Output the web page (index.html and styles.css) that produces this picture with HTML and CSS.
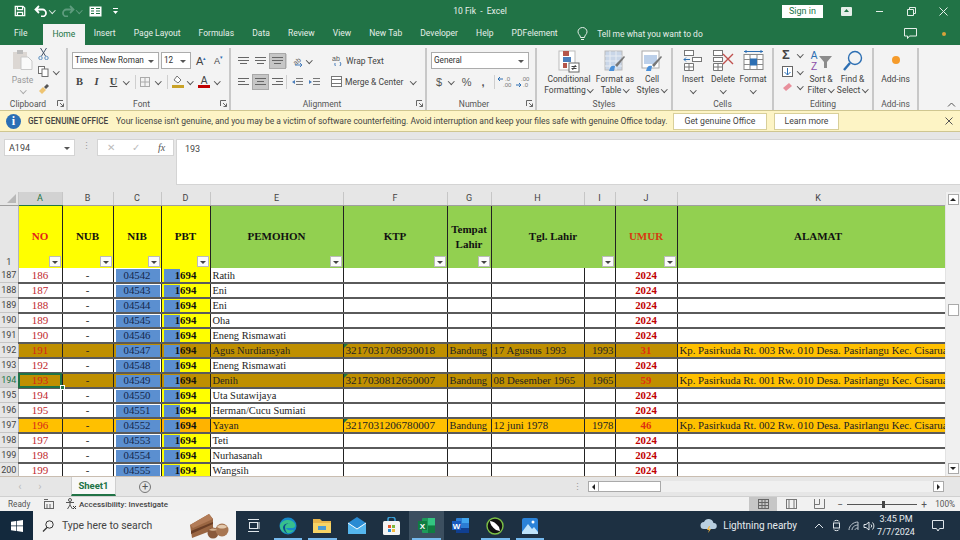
FILE: index.html
```html
<!DOCTYPE html>
<html lang="en">
<head>
<meta charset="utf-8">
<title>10 Fik - Excel</title>
<link rel="stylesheet" href="styles.css">
</head>
<body>
<div class="app">
  <header class="titlebar">
    <div class="qat">
      <svg width="12" height="12" viewBox="0 0 14 14" fill="none" stroke="#fff" stroke-width="1.500"><path d="M1.500 1.500h9l2 2v9h-11z"/><path d="M4 1.500v4h6v-4M4 12.500v-4h6v4"/></svg>
      <svg class="q-undo" width="14" height="12" viewBox="0 0 14 12" fill="none" stroke="#fff" stroke-width="1.800"><path d="M5 1 1.500 4.500 5 8M2 4.500h6.500a3.500 3.500 0 0 1 0 7H7"/></svg>
      <i class="chev light q-c1"></i>
      <svg class="q-redo" width="14" height="12" viewBox="0 0 14 12" fill="none" stroke="#5f9c7e" stroke-width="1.800"><path d="M9 1l3.500 3.500L9 8M12 4.500H5.500a3.500 3.500 0 0 0 0 7H7"/></svg>
      <i class="chev faint q-c2"></i>
      <svg class="q-form" width="13" height="11" viewBox="0 0 13 11"><rect x=".5" y=".5" width="12" height="10" fill="#fff"/><path d="M2 2.500h3M2 5h3M2 7.500h3M7 2.500h4M7 5h4M7 7.500h4" stroke="#217346"/></svg>
      <svg class="q-more" width="7" height="7" viewBox="0 0 7 7" fill="#fff"><path d="M1 0h5v1H1zM1 3h5L3.500 6z"/></svg>
    </div>
    <div class="doc-title">10 Fik &nbsp;-&nbsp; Excel</div>
    <div class="win">
      <button class="signin">Sign in</button>
      <svg class="w-ico" width="11" height="9" viewBox="0 0 11 9"><rect width="11" height="9" rx="1" fill="#e5efe9"/><path d="M5.500 2 3 5h5z" fill="#217346"/></svg>
      <svg class="w-ico" width="9" height="9" viewBox="0 0 9 9"><path d="M1 4.500h7" stroke="#e5efe9"/></svg>
      <svg class="w-ico" width="9" height="9" viewBox="0 0 9 9" fill="none" stroke="#e5efe9"><path d="M2.500 2V.5h6v6H7M.5 2.500h6v6h-6z"/></svg>
      <svg class="w-ico" width="9" height="9" viewBox="0 0 9 9"><path d="M.5.500l8 8m0-8l-8 8" stroke="#e5efe9"/></svg>
    </div>
  </header>

  <nav class="tabs">
    <span class="tab">File</span>
    <span class="tab active">Home</span>
    <span class="tab">Insert</span>
    <span class="tab">Page Layout</span>
    <span class="tab">Formulas</span>
    <span class="tab">Data</span>
    <span class="tab">Review</span>
    <span class="tab">View</span>
    <span class="tab">New Tab</span>
    <span class="tab">Developer</span>
    <span class="tab">Help</span>
    <span class="tab">PDFelement</span>
    <svg class="bulb" width="11" height="14" viewBox="0 0 11 14" fill="none" stroke="#e5efe9"><path d="M3.500 10.500C3.500 8 1 7.500 1 4.800a4.500 4.300 0 0 1 9 0c0 2.700-2.500 3.200-2.500 5.700zM4 12.500h3"/></svg>
    <span class="tell">Tell me what you want to do</span>
    <svg class="comment" width="13" height="11" viewBox="0 0 13 11" fill="none" stroke="#e5efe9"><path d="M.5.500h12v7.500H5.500L3.500 10.500V8h-3z"/></svg>
    <span class="tab-dot"></span>
  </nav>

  <section class="ribbon">
    <div class="group g-clip">
      <div class="group-body">
        <div class="paste">
          <svg width="21" height="20" viewBox="0 0 21 20"><rect x="1" y="2" width="14" height="17" fill="#dcd7d3"/><rect x="5" y="0" width="6" height="4" fill="#bdbdbd"/><path d="M9 7h7l4 4v8.500H9z" fill="#fafafa" stroke="#c9c9c9"/></svg>
          <span class="paste-l">Paste</span>
          <i class="chev faint p-c"></i>
        </div>
        <div class="clip-tools">
          <svg width="11" height="12" viewBox="0 0 11 12" fill="none" stroke="#44546a"><path d="M2.500 0l5 8M8.500 0l-5 8"/><circle cx="2.500" cy="10" r="1.700" stroke="#5b8fc0"/><circle cx="8.500" cy="10" r="1.700" stroke="#5b8fc0"/></svg>
          <div class="tool-row"><svg width="11" height="11" viewBox="0 0 11 11" fill="#fff" stroke="#707070"><rect x=".5" y=".5" width="6" height="7"/><rect x="4" y="3" width="6" height="7.500"/></svg><i class="chev m1"></i></div>
          <svg width="12" height="12" viewBox="0 0 12 12"><path d="M1 8l4-4 3 3-4 4z" fill="#eec472"/><path d="M6 4l3-3 2 2-3 3z" fill="#555"/></svg>
        </div>
      </div>
      <div class="group-label lp10">Clipboard<svg class="launch" width="7" height="7" viewBox="0 0 7 7" fill="none" stroke="#666"><path d="M.5 6V.5H6M3 3l3.500 3.500M6.500 3.500v3h-3"/></svg></div>
    </div>

    <div class="group g-font">
      <div class="group-body col">
        <div class="line">
          <div class="select s-font">Times New Roman<i></i></div>
          <div class="select s-size">12<i></i></div>
          <span class="fa big-a">A<sup>▴</sup></span>
          <span class="fa small-a">A<sup>▾</sup></span>
        </div>
        <div class="line l2 f2">
          <b class="fmt">B</b><em class="fmt">I</em><u class="fmt">U</u><i class="chev"></i>
          <span class="vsep f-s1"></span>
          <svg width="10" height="10" viewBox="0 0 10 10" fill="none" stroke="#aaa"><rect x=".5" y=".5" width="9" height="9"/><path d="M5 0v10M0 5h10"/></svg><i class="chev f-c2"></i>
          <span class="vsep f-s2"></span>
          <svg width="12" height="13" viewBox="0 0 12 13"><path d="M5 1l4 4-3 3-4-3z" fill="#fff" stroke="#777"/><rect y="10" width="12" height="3" fill="#c9a227"/></svg><i class="chev f-c3"></i>
          <svg class="f-a" width="12" height="13" viewBox="0 0 12 13"><text x="6" y="9" font-size="10" text-anchor="middle" fill="#444" font-family="Liberation Sans">A</text><rect y="10" width="12" height="3" fill="#c00000"/></svg><i class="chev f-c4"></i>
        </div>
      </div>
      <div class="group-label lp14">Font<svg class="launch" width="7" height="7" viewBox="0 0 7 7" fill="none" stroke="#666"><path d="M.5 6V.5H6M3 3l3.500 3.500M6.500 3.500v3h-3"/></svg></div>
    </div>

    <div class="group g-align">
      <div class="group-body col">
        <div class="line a-line">
          <span class="al"><svg width="11" height="7" viewBox="0 0 11 7" stroke="#666"><path d="M0 .5h11M0 3.500h11M2 6.500h7"/></svg></span>
          <span class="al"><svg width="11" height="7" viewBox="0 0 11 7" stroke="#666"><path d="M0 .5h11M0 3.500h11M2 6.500h7"/></svg></span>
          <span class="al on"><svg width="11" height="7" viewBox="0 0 11 7" stroke="#666"><path d="M0 .5h11M0 3.500h11M2 6.500h7"/></svg></span>
          <span class="vsep a-s"></span>
          <svg width="12" height="12" viewBox="0 0 12 12" fill="none"><text x="1" y="8" font-size="7" fill="#555" font-family="Liberation Sans" transform="rotate(-40 6 6)">ab</text><path d="M3 10l7 0M8 8l2 2-2 2" stroke="#4a7ebb"/></svg><i class="chev a-c"></i>
          <span class="wide-l wrap"><svg width="11" height="11" viewBox="0 0 11 11" fill="none"><text x="0" y="6" font-size="7" fill="#555" font-family="Liberation Sans">ab</text><path d="M8 7a3 3 0 1 1-5 1" stroke="#4a7ebb"/></svg>Wrap Text</span>
        </div>
        <div class="line l2 a-line">
          <span class="al"><svg width="11" height="8" viewBox="0 0 11 8" stroke="#666"><path d="M0 .5h11M0 3.500h7M0 6.500h11"/></svg></span>
          <span class="al on"><svg width="11" height="8" viewBox="0 0 11 8" stroke="#666"><path d="M0 .5h11M2 3.500h7M0 6.500h11"/></svg></span>
          <span class="al"><svg width="11" height="8" viewBox="0 0 11 8" stroke="#666"><path d="M0 .5h11M4 3.500h7M0 6.500h11"/></svg></span>
          <span class="vsep a-s"></span>
          <svg width="11" height="8" viewBox="0 0 11 8"><path d="M0 4l3-2v4z" fill="#4a7ebb"/><path d="M4 .5h7M4 3.500h7M4 6.500h7" stroke="#777"/></svg>
          <svg class="a-ind" width="11" height="8" viewBox="0 0 11 8"><path d="M3 4l-3-2v4z" fill="#4a7ebb"/><path d="M4 .5h7M4 3.500h7M4 6.500h7" stroke="#777"/></svg>
          <span class="wide-l merge"><svg width="11" height="11" viewBox="0 0 11 11" fill="#fff" stroke="#777"><rect x=".5" y=".5" width="10" height="10"/><path d="M0 3.500h11M0 7.500h11"/></svg>Merge &amp; Center</span><i class="chev m-c"></i>
        </div>
      </div>
      <div class="group-label lp12">Alignment<svg class="launch" width="7" height="7" viewBox="0 0 7 7" fill="none" stroke="#666"><path d="M.5 6V.5H6M3 3l3.500 3.500M6.500 3.500v3h-3"/></svg></div>
    </div>

    <div class="group g-num">
      <div class="group-body col">
        <div class="line"><div class="select s-num">General<i></i></div></div>
        <div class="line l2 n2">
          <span class="sym">$</span><i class="chev n-c"></i><span class="sym pct">%</span><span class="sym comma">,</span><span class="vsep n-s"></span>
          <svg class="dec" width="14" height="12" viewBox="0 0 14 12" font-size="6" font-family="Liberation Sans" fill="#777"><text x="7" y="5">.0</text><text x="5" y="11">.00</text><path d="M0 3h5M2 1 0 3l2 2" stroke="#2d6fb3" fill="none"/></svg>
          <svg class="dec d2" width="14" height="12" viewBox="0 0 14 12" font-size="6" font-family="Liberation Sans" fill="#777"><text x="5" y="5">.00</text><text x="7" y="11">.0</text><path d="M0 9h5M3 7l2 2-2 2" stroke="#2d6fb3" fill="none"/></svg>
        </div>
      </div>
      <div class="group-label lp14">Number<svg class="launch" width="7" height="7" viewBox="0 0 7 7" fill="none" stroke="#666"><path d="M.5 6V.5H6M3 3l3.500 3.500M6.500 3.500v3h-3"/></svg></div>
    </div>

    <div class="group g-styles">
      <div class="group-body">
        <div class="big b-cond">
          <svg width="22" height="23" viewBox="0 0 22 23"><rect x="1" y="1" width="16" height="19" fill="#fff" stroke="#bbb"/><rect x="5" y="1" width="6" height="5" fill="#b4554a"/><rect x="5" y="7" width="8" height="5" fill="#4a7ebb"/><rect x="5" y="13" width="4" height="5" fill="#b4554a"/><rect x="11" y="13" width="10" height="9" fill="#fff" stroke="#666"/><path d="M13.500 16.500h5M13.500 18.500h5M17.500 15l-3 5" stroke="#444" fill="none"/></svg>
          <span>Conditional<br>Formatting<i class="chev t-c"></i></span>
        </div>
        <div class="big b-table">
          <svg width="22" height="23" viewBox="0 0 22 23"><rect x="1" y="1" width="17" height="19" fill="#c9d6e8" stroke="#bbb"/><path d="M1 6h17M1 11h17M1 16h17M6 1v19M12 1v19" stroke="#e8edf3"/><path d="M5 21c1-5 3-6 6-5l-1 5z" fill="#4a90d9"/><path d="M11 15l9-9 1 1-8 10z" fill="#777"/></svg>
          <span>Format as<br>Table<i class="chev t-c"></i></span>
        </div>
        <div class="big b-cell">
          <svg width="22" height="23" viewBox="0 0 22 23"><rect x="1" y="1" width="17" height="17" fill="#fff" stroke="#aaa"/><rect x="3" y="5" width="13" height="9" fill="#bcd0ea"/><path d="M5 21c1-5 3-6 6-5l-1 5z" fill="#4a90d9"/><path d="M11 15l9-9 1 1-8 10z" fill="#777"/></svg>
          <span>Cell<br>Styles<i class="chev t-c"></i></span>
        </div>
      </div>
      <div class="group-label">Styles</div>
    </div>

    <div class="group g-cells">
      <div class="group-body">
        <div class="big b-c">
          <svg width="20" height="21" viewBox="0 0 20 21" fill="#fff" stroke="#777"><rect x="1.500" y=".5" width="9" height="5"/><rect x="9.500" y="7.500" width="9" height="4"/><path d="M7 9.500H1M3 7.500l-2 2 2 2" fill="none" stroke="#2d6fb3"/><path d="M1.500 13.500h9v7h-9zM6 13.500v7M1.500 17h9"/></svg>
          <span>Insert</span><i class="chev c-c"></i>
        </div>
        <div class="big b-c">
          <svg width="22" height="21" viewBox="0 0 22 21" fill="#fff" stroke="#777"><rect x="1.500" y=".5" width="9" height="5"/><rect x="1.500" y="7.500" width="9" height="4"/><path d="M1.500 13.500h9v7h-9zM6 13.500v7M1.500 17h9"/><path d="M11 4l10 10m0-10L11 14" stroke="#c0504d" stroke-width="1.400" fill="none"/></svg>
          <span>Delete</span><i class="chev c-c"></i>
        </div>
        <div class="big b-c">
          <svg width="21" height="21" viewBox="0 0 21 21" fill="#fff" stroke="#888"><path d="M1 1.500h19M3 0v3M18 0v3" stroke="#2d6fb3"/><rect x="1" y="4.500" width="19" height="15"/><path d="M7 4.500v15M14 4.500v15M1 9.500h19M1 14.500h19"/><rect x="7" y="8.500" width="7" height="7" fill="#2d6fb3" stroke="none"/></svg>
          <span>Format</span><i class="chev c-c"></i>
        </div>
      </div>
      <div class="group-label">Cells</div>
    </div>

    <div class="group g-edit">
      <div class="group-body">
        <div class="edit-tools">
          <div class="tool-row"><span class="sigma">Σ</span><i class="chev e-c"></i></div>
          <div class="tool-row"><svg width="11" height="11" viewBox="0 0 11 11" fill="#fff" stroke="#666"><rect x=".5" y=".5" width="10" height="10"/><path d="M5.500 2v7M2.500 6l3 3 3-3" stroke="#2d6fb3" fill="none"/></svg><i class="chev e-c"></i></div>
          <div class="tool-row"><svg width="11" height="10" viewBox="0 0 11 10"><path d="M1 6l6-5 3 3-6 5z" fill="#e8909c"/></svg><i class="chev e-c"></i></div>
        </div>
        <div class="big b-sort">
          <svg width="24" height="21" viewBox="0 0 24 21"><text x="5" y="9" font-size="10" text-anchor="middle" fill="#2d6fb3" font-family="Liberation Sans">A</text><text x="5" y="20" font-size="10" text-anchor="middle" fill="#8c4fa8" font-family="Liberation Sans">Z</text><path d="M10 6h13l-5 6v6h-3v-6z" fill="#8c8c8c"/></svg>
          <span class="b-t2">Sort &amp;<br>Filter<i class="chev t-c"></i></span>
        </div>
        <div class="big b-find">
          <svg width="21" height="22" viewBox="0 0 21 22" fill="none"><circle cx="13" cy="8" r="6.500" stroke="#2d6fb3" stroke-width="1.400"/><path d="M8 13l-6 7" stroke="#2d6fb3" stroke-width="2.400"/></svg>
          <span class="b-t3">Find &amp;<br>Select<i class="chev t-c"></i></span>
        </div>
      </div>
      <div class="group-label">Editing</div>
    </div>

    <div class="group g-add">
      <div class="group-body">
        <div class="big b-add"><i class="orange"></i><span>Add-ins</span></div>
      </div>
      <div class="group-label">Add-ins</div>
    </div>
    <svg class="collapse" width="9" height="5" viewBox="0 0 9 5" fill="none" stroke="#555"><path d="M1 4.500l3.500-3.500L8 4.500"/></svg>
  </section>

  <aside class="infobar">
    <span class="info-i">i</span>
    <strong>GET GENUINE OFFICE</strong>
    <span class="info-t">Your license isn't genuine, and you may be a victim of software counterfeiting. Avoid interruption and keep your files safe with genuine Office today.</span>
    <button class="info-b b1">Get genuine Office</button>
    <button class="info-b b2">Learn more</button>
    <svg class="info-x" width="8" height="8" viewBox="0 0 8 8"><path d="M.5.500l7 7m0-7l-7 7" stroke="#555"/></svg>
  </aside>

  <section class="fbar">
    <div class="namebox">A194<i></i></div>
    <span class="fdots">⋮</span>
    <div class="fbtns"><span class="fx-x">✕</span><span class="fx-c">✓</span><em>fx</em></div>
    <div class="finput">193</div>
  </section>

  <main class="sheet-wrap">
    <div class="sheet">
      <table class="grid">
        <colgroup><col class="w0"><col class="w1"><col class="w2"><col class="w3"><col class="w4"><col class="w5"><col class="w6"><col class="w7"><col class="w8"><col class="w9"><col class="w10"><col class="w11"></colgroup>
        <thead>
          <tr class="cols"><th class="corner"><span></span></th><th class="sel">A</th><th>B</th><th>C</th><th>D</th><th>E</th><th>F</th><th>G</th><th>H</th><th>I</th><th>J</th><th>K</th></tr>
          <tr class="head">
            <th class="rn">1</th>
            <th class="y red">NO<i class="f"></i></th><th class="y">NUB<i class="f"></i></th><th class="y">NIB<i class="f"></i></th><th class="y">PBT<i class="f"></i></th>
            <th class="g">PEMOHON<i class="f"></i></th><th class="g">KTP<i class="f"></i></th><th class="g">Tempat<br>Lahir<i class="f"></i></th><th class="g" colspan="2">Tgl. Lahir<i class="f"></i></th><th class="g red">UMUR<i class="f"></i></th><th class="g">ALAMAT</th>
          </tr>
        </thead>
        <tbody>
          <tr><th>187</th><td>186</td><td>-</td><td>04542</td><td>1694</td><td>Ratih</td><td></td><td></td><td></td><td></td><td>2024</td><td></td></tr>
          <tr><th>188</th><td>187</td><td>-</td><td>04543</td><td>1694</td><td>Eni</td><td></td><td></td><td></td><td></td><td>2024</td><td></td></tr>
          <tr><th>189</th><td>188</td><td>-</td><td>04544</td><td>1694</td><td>Eni</td><td></td><td></td><td></td><td></td><td>2024</td><td></td></tr>
          <tr><th>190</th><td>189</td><td>-</td><td>04545</td><td>1694</td><td>Oha</td><td></td><td></td><td></td><td></td><td>2024</td><td></td></tr>
          <tr><th>191</th><td>190</td><td>-</td><td>04546</td><td>1694</td><td>Eneng Rismawati</td><td></td><td></td><td></td><td></td><td>2024</td><td></td></tr>
          <tr class="gold"><th>192</th><td>191</td><td>-</td><td>04547</td><td>1694</td><td>Agus Nurdiansyah</td><td class="tri">3217031708930018</td><td>Bandung</td><td>17 Agustus 1993</td><td class="yr">1993</td><td>31</td><td>Kp. Pasirkuda Rt. 003 Rw. 010 Desa. Pasirlangu Kec. Cisarua</td></tr>
          <tr><th>193</th><td>192</td><td>-</td><td>04548</td><td>1694</td><td>Eneng Rismawati</td><td></td><td></td><td></td><td></td><td>2024</td><td></td></tr>
          <tr class="gold cur"><th>194</th><td class="active">193<i class="handle"></i></td><td>-</td><td>04549</td><td>1694</td><td>Denih</td><td class="tri">3217030812650007</td><td>Bandung</td><td>08 Desember 1965</td><td class="yr">1965</td><td>59</td><td>Kp. Pasirkuda Rt. 001 Rw. 010 Desa. Pasirlangu Kec. Cisarua</td></tr>
          <tr><th>195</th><td>194</td><td>-</td><td>04550</td><td>1694</td><td>Uta Sutawijaya</td><td></td><td></td><td></td><td></td><td>2024</td><td></td></tr>
          <tr><th>196</th><td>195</td><td>-</td><td>04551</td><td>1694</td><td>Herman/Cucu Sumiati</td><td></td><td></td><td></td><td></td><td>2024</td><td></td></tr>
          <tr class="amber"><th>197</th><td>196</td><td>-</td><td>04552</td><td>1694</td><td>Yayan</td><td class="tri">3217031206780007</td><td>Bandung</td><td>12 juni 1978</td><td class="yr">1978</td><td>46</td><td>Kp. Pasirkuda Rt. 002 Rw. 010 Desa. Pasirlangu Kec. Cisarua</td></tr>
          <tr><th>198</th><td>197</td><td>-</td><td>04553</td><td>1694</td><td>Teti</td><td></td><td></td><td></td><td></td><td>2024</td><td></td></tr>
          <tr><th>199</th><td>198</td><td>-</td><td>04554</td><td>1694</td><td>Nurhasanah</td><td></td><td></td><td></td><td></td><td>2024</td><td></td></tr>
          <tr><th>200</th><td>199</td><td>-</td><td>04555</td><td>1694</td><td>Wangsih</td><td></td><td></td><td></td><td></td><td>2024</td><td></td></tr>
        </tbody>
      </table>
    </div>
    <div class="vscroll">
      <span class="sb-btn"><i class="tri-u"></i></span>
      <span class="sb-thumb"></span>
      <span class="sb-btn end"><i class="tri-d"></i></span>
    </div>
  </main>

  <section class="sheetbar">
    <span class="nav-a">‹</span><span class="nav-a">›</span>
    <span class="sheet-tab">Sheet1</span>
    <span class="add-sheet">+</span>
    <span class="hdots">⋮</span>
    <div class="hscroll"><span class="hs-btn"><i class="tri-l"></i></span><span class="hs-thumb"></span><span class="hs-btn end"><i class="tri-r"></i></span></div>
  </section>

  <footer class="status">
    <span class="ready">Ready</span>
    <svg class="st-macro" width="10" height="10" viewBox="0 0 10 10" fill="none" stroke="#666"><rect x=".5" y="2.500" width="9" height="7"/><path d="M0 .5h4M3 5v4M6 5v4"/></svg>
    <svg class="st-acc" width="12" height="12" viewBox="0 0 12 12" fill="none" stroke="#555"><circle cx="5" cy="2" r="1.500"/><path d="M1 4.500h8M5 4v3l-2.500 4M5 7l2.500 4"/><path d="M8 8l3 3m0-3l-3 3" stroke="#333"/></svg>
    <span class="acc">Accessibility: Investigate</span>
    <div class="views">
      <span class="view on"><svg width="11" height="10" viewBox="0 0 11 10" fill="none" stroke="#666"><rect x=".5" y=".5" width="10" height="9"/><path d="M4 0v10M7 0v10M0 3.500h11M0 6.500h11"/></svg></span>
      <span class="view"><svg width="11" height="10" viewBox="0 0 11 10" fill="none" stroke="#777"><rect x=".5" y=".5" width="10" height="9"/><path d="M3 .5v9M8 .5v9"/></svg></span>
      <span class="view"><svg width="11" height="10" viewBox="0 0 11 10" fill="none" stroke="#777"><path d="M.5 0v9.500h10V0M5.500 0v5.500H.5"/></svg></span>
      <span class="zoom-m">−</span>
      <span class="slider"><i></i></span>
      <span class="zoom-p">+</span>
      <span class="zoom-v">100%</span>
    </div>
  </footer>

  <footer class="taskbar">
    <span class="start"><svg width="12" height="12" viewBox="0 0 12 12" fill="#fff"><path d="M0 1.700 5 1v4.600H0zM5.700.9 12 0v5.600H5.700zM0 6.300h5V11l-5-.7zM5.700 6.300H12V12l-6.300-.9z"/></svg></span>
    <div class="search">
      <svg width="12" height="12" viewBox="0 0 12 12" fill="none" stroke="#333"><circle cx="7.500" cy="4.500" r="3.700"/><path d="M5 7.500 1 11.500" stroke-width="1.300"/></svg>
      <span class="s-txt">Type here to search</span>
      <svg class="cake" width="40" height="26" viewBox="0 0 40 26"><path d="M1 12 20 1l4 5v11L3 25z" fill="#9a6642"/><path d="M1 12 20 1l4 5L4 15z" fill="#b27c58"/><path d="M2 18 24 9v2L2 21z" fill="#6b3f26"/><circle cx="24" cy="20" r="5.500" fill="#8a5a3b"/><circle cx="33" cy="17" r="6.500" fill="#a87652"/><path d="M28 14c2-3 8-3 10 0-3 2-7 2-10 0z" fill="#e3c9ad"/><path d="M20 17c2-2 6-2 8 0-2 1-6 1-8 0z" fill="#d3b08e"/></svg>
    </div>
    <div class="apps">
      <span class="app-i"><svg width="13" height="13" viewBox="0 0 13 13" fill="none" stroke="#dfe5ea"><rect x="2.500" y="3.500" width="8" height="6"/><path d="M1 .5h11M1 12.500h11M12 3v7"/></svg></span>
      <span class="app-i ul"><svg width="18" height="18" viewBox="0 0 18 18"><circle cx="9" cy="9" r="8.500" fill="#1689c9"/><path d="M1 8C3 2 13 1 16 7c1 3-1 4-3 4H7c1 2 4 3 8 2-3 4-9 4-12 1C1 12 1 10 1 8z" fill="#37c08d"/><path d="M6 10C6 7 9 6 11 7c-2-1-6-1-7 3 0 3 2 6 6 7-3-1-4-4-4-7z" fill="#0b4f8f"/></svg></span>
      <span class="app-i ul"><svg width="18" height="15" viewBox="0 0 18 15"><path d="M0 1h7l2 2h9v12H0z" fill="#e8b54a"/><rect x="0" y="5" width="18" height="10" fill="#f6d365"/><rect x="5" y="8" width="8" height="4" fill="#4a9bd4"/></svg></span>
      <span class="app-i"><svg width="18" height="17" viewBox="0 0 18 17"><path d="M0 6 9 0l9 6v11H0z" fill="#2a8bd3"/><path d="M0 6l9 6 9-6v11H0z" fill="#55b6ee"/><path d="M0 6l9 6 9-6" fill="none" stroke="#fff"/></svg></span>
      <span class="app-i"><svg width="17" height="18" viewBox="0 0 17 18"><rect y="4" width="17" height="14" rx="1.500" fill="#f4f4f4"/><path d="M5 4V2a3.500 2 0 0 1 7 0v2" fill="none" stroke="#3aa0d8" stroke-width="1.500"/><rect x="5" y="8" width="3" height="3" fill="#e8562a"/><rect x="9" y="8" width="3" height="3" fill="#7db93b"/><rect x="5" y="12" width="3" height="3" fill="#2a8bd3"/><rect x="9" y="12" width="3" height="3" fill="#f5b93a"/></svg></span>
      <span class="app-i cur ul"><svg width="17" height="15" viewBox="0 0 17 15"><rect x="4" width="13" height="15" rx="1" fill="#1e9b5b"/><rect x="10" y="0" width="7" height="7" fill="#33c481"/><rect x="10" y="8" width="7" height="7" fill="#107c41"/><rect y="3" width="9" height="9" fill="#107c41"/><text x="4.500" y="10.500" font-size="8" font-weight="700" text-anchor="middle" fill="#fff" font-family="Liberation Sans">X</text></svg></span>
      <span class="app-i"><svg width="17" height="15" viewBox="0 0 17 15"><rect x="4" width="13" height="15" rx="1" fill="#2b7cd3"/><rect x="4" y="10" width="13" height="5" fill="#103f91"/><rect x="10" y="0" width="7" height="5" fill="#41a5ee"/><rect y="3" width="9" height="9" fill="#185abd"/><text x="4.500" y="10.500" font-size="8" font-weight="700" text-anchor="middle" fill="#fff" font-family="Liberation Sans">W</text></svg></span>
      <span class="app-i ul"><svg width="18" height="18" viewBox="0 0 18 18"><circle cx="9" cy="9" r="8" fill="#111" stroke="#7cc046" stroke-width="1.400"/><path d="M4 4c3 0 6 2 9 6l1 4-4-1C6 10 4 7 4 4z" fill="#fff"/></svg></span>
      <span class="app-i ul"><svg width="16" height="16" viewBox="0 0 16 16"><rect width="16" height="16" rx="2" fill="#2a82d8"/><path d="M0 14 6 6l4 5 2-2 4 5v2H0z" fill="#bfe3fa"/><circle cx="11" cy="4" r="1.500" fill="#fff"/></svg></span>
    </div>
    <div class="tray">
      <svg class="weather" width="18" height="17" viewBox="0 0 18 17"><path d="M4 12a3.500 3.500 0 0 1 0-7 5 5 0 0 1 9.500 1A3 3 0 0 1 14 12z" fill="#b9cfe0"/><path d="M9 9l-2 4h2l-1 3 3-4H9l1-3z" fill="#f4b63f"/></svg>
      <span class="w-txt">Lightning nearby</span>
      <svg class="t-up" width="10" height="6" viewBox="0 0 10 6" fill="none" stroke="#dfe5ea"><path d="M1 5l4-4 4 4"/></svg>
      <svg class="t-meet" width="9" height="13" viewBox="0 0 9 13" fill="none" stroke="#dfe5ea"><rect x="1.500" y="4" width="6" height="5"/><path d="M2 2.500C2 1 7 1 7 2.500M2 10.500c0 1.500 5 1.500 5 0"/></svg>
      <svg class="t-wifi" width="11" height="10" viewBox="0 0 11 10" fill="none" stroke="#b9c3cc"><path d="M1 9c0-4 4-8 9-8M4 9c0-3 3-5 6-5M7 9c0-1 1-2 3-2M10 9V1"/></svg>
      <svg class="t-vol" width="12" height="10" viewBox="0 0 12 10" fill="none" stroke="#dfe5ea"><path d="M1 3.500h2L6 1v8L3 6.500H1zM8 3.500a2 2 0 0 1 0 3M9.500 1.500a5 5 0 0 1 0 7"/></svg>
      <div class="clock"><span>3:45 PM</span><span>7/7/2024</span></div>
      <svg class="t-note" width="12" height="12" viewBox="0 0 12 12" fill="none" stroke="#dfe5ea"><path d="M.5.500h11v8H7.500L6 11 4.500 8.500h-4z"/></svg>
    </div>
  </footer>
</div>
</body>
</html>
```

FILE: styles.css
```css
* { box-sizing: border-box; }
html, body { margin: 0; padding: 0; }
body { width: 960px; height: 540px; overflow: hidden; font-family: Roboto, "Noto Sans", sans-serif; font-size: 9px; color: #444; }
.app { width: 960px; height: 540px; display: flex; flex-direction: column; background: #e6e6e6; }
button { font: inherit; padding: 0; }
svg { flex: none; }

/* Chevrons */
.chev { display: inline-block; width: 7px; height: 7px; position: relative; flex: none; --c: #555; }
.chev::before { content: ""; position: absolute; left: 1.500px; top: .5px; width: 3.500px; height: 3.500px; border-right: 1px solid var(--c); border-bottom: 1px solid var(--c); transform: rotate(45deg); }
.chev.light { --c: #dfe9e3; }
.chev.faint { --c: #5f9c7e; }
.paste .chev.faint { --c: #aaa; }

/* Title bar */
.titlebar { height: 22px; background: #217346; color: #e8f1ec; display: grid; grid-template-columns: 1fr auto 1fr; align-items: center; }
.qat { display: flex; align-items: center; padding-left: 14px; }
.q-undo { margin-left: 8px; }
.q-c1 { margin-left: .5px; }
.q-redo { margin-left: 5.500px; }
.q-form { margin-left: 7px; }
.q-more { margin-left: 10px; }
.doc-title { font-size: 8.500px; white-space: pre; }
.win { display: flex; justify-content: flex-end; align-items: center; }
.signin { width: 41px; height: 13px; line-height: 12px; background: #fff; border: 0; color: #217346; margin-right: 18px; font-size: 9px; }
.w-ico { margin-right: 23px; }
.w-ico:last-child { margin-right: 12px; }

/* Tabs */
.tabs { height: 23px; background: #217346; display: flex; align-items: center; color: #e5efe9; font-size: 8.500px; padding-left: 5px; }
.tab { padding: 0 9.050px; height: 23px; line-height: 23px; }
.tab.active { background: #f3f3f3; color: #217346; height: 21px; margin: 2px 0 0 6.500px; line-height: 20px; padding: 0 9.500px; }
.bulb { margin-left: 10px; }
.tell { margin-left: 9.500px; }
.comment { margin-left: auto; margin-right: 25px; }
.tab-dot { width: 4px; height: 4px; border-radius: 50%; background: #d8a23a; margin-right: 14px; }

/* Ribbon */
.ribbon { height: 65px; background: #f3f3f3; display: flex; padding-top: 3px; position: relative; font-size: 8.500px; color: #444; }
.group { display: flex; flex-direction: column; border-right: 2px solid #c8c8c8; height: 62px; }
.group-body { flex: 1; display: flex; min-height: 0; }
.group-body.col { flex-direction: column; }
.group-label { height: 14px; padding-top: 1px; line-height: 14px; text-align: center; position: relative; color: #555; }
.lp10 { padding-right: 10px; } .lp12 { padding-right: 12px; } .lp14 { padding-right: 14px; }
.launch { position: absolute; right: 2px; bottom: 3px; }
.g-clip { width: 68px; } .g-font { width: 163px; } .g-align { width: 196px; } .g-num { width: 110px; }
.g-styles { width: 136px; } .g-cells { width: 101px; } .g-edit { width: 100px; } .g-add { width: 45px; }
.paste { width: 36px; padding: 2px 0 0 9px; display: flex; flex-direction: column; align-items: center; }
.paste-l { color: #999; margin-top: 5px; line-height: 11px; }
.p-c { margin-top: 1px; }
.clip-tools { display: flex; flex-direction: column; gap: 6px; padding-left: 2px; }
.tool-row { display: flex; align-items: center; }
.m1 { margin-left: 3px; }
.line { display: flex; align-items: center; height: 21px; padding: 4px 0 0 4px; flex: none; }
.line.l2 { height: 20px; margin-top: 1px; padding-top: 3px; }
.select { height: 17px; background: #fff; border: 1px solid #acacac; line-height: 15px; padding-left: 2px; position: relative; color: #333; font-size: 8.200px; }
.select i, .namebox i { position: absolute; right: 4px; top: 7px; border: 3px solid transparent; border-top-color: #555; border-bottom: 0; }
.s-font { width: 87px; margin-right: 2px; }
.s-size { width: 30px; }
.fa { font-size: 11px; margin-left: 5px; font-family: "Liberation Sans", sans-serif; color: #444; width: 13px; }
.fa sup { font-size: 5px; color: #2d6fb3; vertical-align: 5px; line-height: 0; }
.small-a { font-size: 9px; }

.f2 { padding-left: 3px; }
.fmt { font-family: "Liberation Serif", serif; font-size: 10.500px; color: #444; width: 17px; text-align: center; font-style: normal; font-weight: 700; flex: none; }
em.fmt { font-style: italic; }
.vsep { width: 1px; height: 14px; background: #cfcfcf; flex: none; }
.f-s1 { margin: 0 4px 0 6px; }
.f-c2 { margin-left: 4.500px; }
.f-s2 { margin: 0 4px 0 5px; }
.f-c3 { margin-left: 2.500px; }
.f-a { margin-left: 5px; }
.f-c4 { margin-left: 3.500px; }

.al { width: 17px; height: 16px; display: flex; align-items: center; justify-content: center; flex: none; }
.al.on { background: #c6c6c6; border: 1px solid #a9a9a9; }
.a-s { margin: 0 5px 0 0; }
.a-c { margin-left: 1px; }
.a-ind { margin-left: 6px; }
.wide-l { display: inline-flex; align-items: center; gap: 3px; white-space: nowrap; color: #444; }
.wrap { margin-left: 20px; }
.merge { margin-left: 11px; }
.m-c { margin-left: 6px; }

.s-num { width: 98px; }
.n2 { padding-left: 9px; }
.sym { font-size: 11px; color: #555; font-family: "Liberation Sans", sans-serif; flex: none; }
.n-c { margin-left: 5.500px; }
.pct { margin-left: 7px; }
.comma { margin-left: 10px; font-weight: 700; }
.n-s { margin-left: 10px; }
.dec { margin-left: 3px; }
.d2 { margin-left: 4px; }

.big { display: flex; flex-direction: column; align-items: center; text-align: center; line-height: 11px; padding-top: 2px; flex: none; }
.big > span { margin-top: .5px; white-space: nowrap; }
.big > .chev { margin-top: 3px; }
.t-c { vertical-align: middle; margin-left: 1px; }
.b-cond { width: 56px; margin-left: 4px; }
.b-table { width: 36px; }
.b-cell { width: 38px; }
.b-c { width: 30px; }
.b-c > span { margin-top: 2.500px; }
.b-c:first-child { margin-left: 5px; }
.edit-tools { display: flex; flex-direction: column; gap: 5px; padding: 1px 0 0 8px; width: 31px; flex: none; }
.sigma { font-size: 13px; line-height: 12px; color: #444; font-family: "Liberation Sans", sans-serif; width: 11px; font-weight: 700; }
.e-c { margin-left: 3px; }
.edit-tools .tool-row { width: 24px; }
.b-sort { width: 32px; }
.b-find { width: 31px; }
.big > .b-t2 { margin-top: 2.500px; }
.big > .b-t3 { margin-top: 1.500px; }
.b-add { width: 43px; }
.orange { width: 8px; height: 8px; border-radius: 50%; background: #f59b2b; margin: 6px 0 9.500px; }
.collapse { position: absolute; right: 4px; bottom: 3px; }

/* Infobar */
.infobar { height: 22px; background: #fdf4c5; border-top: 1px solid #cfc690; border-bottom: 1px solid #cfc690; display: flex; align-items: center; color: #444; font-size: 8.500px; }
.info-i { width: 15px; height: 15px; border-radius: 50%; background: #2b6fb5; color: #fff; font-family: "Liberation Serif", serif; font-weight: 700; font-size: 12px; line-height: 15px; text-align: center; margin-left: 6px; }
.infobar strong { margin-left: 7px; font-weight: 500; width: 88px; white-space: nowrap; font-size: 8.200px; }
.info-t { white-space: nowrap; width: 557px; }
.info-b { height: 17px; background: #fff; border: 1px solid #d8cf9a; color: #444; font-size: 8.700px; }
.b1 { width: 94px; } .b2 { width: 65px; margin-left: 7px; }
.info-x { margin-left: auto; margin-right: 7px; }

/* Formula bar */
.fbar { height: 60px; background: #e6e6e6; display: flex; align-items: flex-start; padding: 7px 0 0 4px; font-size: 9px; }
.namebox { width: 71px; height: 17px; background: #fff; border: 1px solid #d4d4d4; padding-left: 4px; line-height: 16px; position: relative; color: #444; }
.fdots { width: 22px; text-align: center; color: #999; line-height: 15px; }
.fbtns { width: 77px; height: 17px; background: #fff; border: 1px solid #d4d4d4; display: flex; align-items: center; color: #bbb; font-size: 10px; padding-left: 9px; }
.fx-c { margin-left: 17px; }
.fbtns em { margin-left: 18px; color: #555; font-family: "Liberation Serif", serif; }
.finput { flex: 1; height: 46px; margin-left: 2px; background: #fff; border: 1px solid #d4d4d4; border-right: 0; padding: 2px 0 0 8px; line-height: 14px; color: #444; }

/* Sheet */
.sheet-wrap { height: 284px; display: flex; background: #fff; }
.sheet { width: 945px; overflow: hidden; flex: none; }
.grid { width: 959px; table-layout: fixed; border-collapse: collapse; font-family: "Liberation Serif", serif; font-size: 10.800px; color: #222; }
.w0 { width: 18px; } .w1 { width: 44px; } .w2 { width: 51px; } .w3 { width: 48px; } .w4 { width: 49px; } .w5 { width: 133px; }
.w6 { width: 104px; } .w7 { width: 44px; } .w8 { width: 93px; } .w9 { width: 31px; } .w10 { width: 62px; } .w11 { width: 282px; }
.cols th { height: 13px; padding: 0; background: #e6e6e6; font: 400 9px/12px Roboto, sans-serif; color: #444; border-right: 1px solid #c6c6c6; border-bottom: 1px solid #9f9f9f; }
.cols .sel { background: #d2d2d2; color: #217346; border-bottom: 1px solid #217346; }
.corner { position: relative; }
.corner span { position: absolute; right: 2px; bottom: 2px; border-style: solid; border-width: 0 0 9px 9px; border-color: transparent transparent #b8b8b8 transparent; }
.head th { height: 63px; padding: 0; font-size: 11px; font-weight: 700; color: #111; position: relative; line-height: 15px; border-right: 1px solid #222; }
.head .rn { background: #e6e6e6; font: 400 9px/12px Roboto, sans-serif; color: #444; vertical-align: bottom; border-right: 1px solid #b5b5b5; }
.head .y { background: #ffff00; }
.head .g { background: #92d050; }
.head .y.red { color: #e3231b; }
.head .g.red { color: #d83a12; }
.f { position: absolute; right: 1px; bottom: 1px; width: 12px; height: 11px; background: #fbfbfb; border: 1px solid #bbb; }
.f::after { content: ""; position: absolute; left: 2.500px; top: 3.500px; border: 3px solid transparent; border-top-color: #444; border-bottom: 0; }
tbody tr { --row: #fff; --pbt: #ffff00; --alamat: #fff; --blue: #5b8fd0; }
tbody tr.gold { --row: #bf8f00; --pbt: #bf8f00; --alamat: #ffc000; }
tbody tr.amber { --row: #ffc000; --pbt: #ffb300; --alamat: #ffc000; }
tbody th { height: 14.860px; padding: 0; background: #e6e6e6; font: 400 9px/12px Roboto, sans-serif; color: #444; border-right: 1px solid #b5b5b5; border-bottom: 1px solid #c6c6c6; text-align: center; }
tbody td { height: 14.860px; padding: 0 0 0 2px; background: var(--row); border-right: 1px solid #222; border-bottom: 2px solid #5a5a5a; white-space: nowrap; overflow: hidden; line-height: 13px; vertical-align: bottom; position: relative; }
tbody td:nth-child(2) { text-align: center; color: #c0272d; padding: 0; font-size: 11px; }
tbody td:nth-child(3) { text-align: center; padding: 0; }
tbody td:nth-child(4) { text-align: center; padding: 0; color: #14264a; background: linear-gradient(var(--blue), var(--blue)) 2px 1px / 44px calc(100% - 1px) no-repeat, var(--row); }
tbody td:nth-child(5) { text-align: center; padding: 0; font-weight: 700; color: #111; background: linear-gradient(var(--blue), var(--blue)) 2px 1px / 16px calc(100% - 1px) no-repeat, var(--pbt); }
tbody td:nth-child(6) { font-size: 10.400px; }
tbody td:nth-child(7) { font-size: 11.200px; }
tbody td:nth-child(8) { font-size: 10.400px; }
tbody td:nth-child(11) { text-align: center; padding: 0; font-weight: 700; color: #c00000; }
tbody td:nth-child(12) { background: var(--alamat); }
.gold td:nth-child(11), .amber td:nth-child(11) { color: #e0300f; }
.gold td:nth-child(2), .amber td:nth-child(2) { color: #d6261a; }
tbody td.yr { text-align: right; padding-right: 1px; }
.tri::before { content: ""; position: absolute; left: 0; top: 0; border-style: solid; border-width: 4px 4px 0 0; border-color: #1d7a3c transparent transparent transparent; }
.cur th { color: #217346; background: #d2d2d2; }
tbody td.active { overflow: visible; outline: 2px solid #217346; outline-offset: -2px; }
.handle { position: absolute; right: -3px; bottom: -3px; width: 5px; height: 5px; background: #217346; border: 1px solid #fff; z-index: 2; }
.vscroll { width: 15px; background: #f0f0f0; display: flex; flex-direction: column; align-items: center; border-left: 1px solid #e3e3e3; }
.sb-btn { width: 11px; height: 11px; background: #fff; border: 1px solid #aaa; margin-top: 2px; display: flex; align-items: center; justify-content: center; }
.sb-btn.end { margin: auto 0 2px; }
.sb-thumb { width: 11px; height: 12px; background: #fff; border: 1px solid #aaa; margin-top: 99px; }
.tri-u, .tri-d, .tri-l, .tri-r { width: 0; height: 0; border: 3px solid transparent; }
.tri-u { border-bottom-color: #222; border-top: 0; }
.tri-d { border-top-color: #222; border-bottom: 0; }
.tri-l { border-right-color: #222; border-left: 0; }
.tri-r { border-left-color: #222; border-right: 0; }

/* Sheet tabs */
.sheetbar { height: 20px; background: #e6e6e6; border-top: 1px solid #c9bdb0; display: flex; align-items: center; color: #bbb; }
.nav-a { width: 20px; text-align: center; font-size: 11px; }
.nav-a:first-child { margin-left: 10px; }
.sheet-tab { margin-left: 21px; width: 45px; height: 19px; background: #f8f8f8; border-bottom: 2px solid #217346; border-left: 1px solid #cfcfcf; border-right: 1px solid #cfcfcf; color: #217346; font-weight: 700; font-size: 9.500px; line-height: 17px; text-align: center; }
.add-sheet { margin-left: 23px; width: 12px; height: 12px; border: 1px solid #777; border-radius: 50%; color: #555; font-size: 11px; line-height: 9px; text-align: center; }
.hdots { margin-left: 421px; color: #999; width: 10px; text-align: center; }
.hscroll { margin-left: 6px; width: 356px; height: 11px; display: flex; background: #f0f0f0; }
.hs-btn { width: 11px; height: 11px; background: #fff; border: 1px solid #aaa; display: flex; align-items: center; justify-content: center; flex: none; }
.hs-thumb { width: 63px; background: #fff; border: 1px solid #aaa; margin-left: -1px; }
.hs-btn.end { margin-left: auto; }

/* Status */
.status { height: 15px; background: #f1f1f1; border-top: 1px solid #d0d0d0; display: flex; align-items: center; font-size: 8.200px; color: #555; }
.ready { margin-left: 8px; width: 35px; }
.st-macro { margin-left: 1px; }
.st-acc { margin-left: 11px; }
.acc { margin-left: 2px; font-weight: 500; color: #444; white-space: nowrap; font-size: 8px; }
.views { margin-left: auto; display: flex; align-items: center; height: 15px; padding-right: 5px; }
.view { width: 28px; height: 15px; display: flex; align-items: center; justify-content: center; }
.view.on { background: #c6c6c6; }
.zoom-m, .zoom-p { font-size: 10px; width: 10px; text-align: center; }
.zoom-m { margin-left: 2px; }
.slider { width: 70px; height: 1px; background: #555; position: relative; margin: 0 2px; }
.slider i { position: absolute; left: 35px; top: -3px; width: 3px; height: 7px; background: #444; }
.zoom-v { width: 22px; margin-left: 4px; text-align: right; }

/* Taskbar */
.taskbar { height: 29px; background: #1d3042; display: flex; align-items: stretch; color: #e6ebef; }
.start { width: 33px; background: #13293d; display: flex; align-items: center; justify-content: center; }
.search { width: 203px; background: #f2f2f2; display: flex; align-items: center; padding-left: 9px; color: #444; font-size: 10.400px; }
.s-txt { margin-left: 8px; white-space: nowrap; }
.cake { margin-left: auto; margin-right: 7px; }
.apps { display: flex; }
.app-i { width: 34.600px; display: flex; align-items: center; justify-content: center; position: relative; }
.app-i.cur { background: #3c4f60; }
.app-i.ul::after { content: ""; position: absolute; left: 3px; right: 3px; bottom: 0; height: 2px; background: #76b9ed; }
.tray { margin-left: auto; display: flex; align-items: center; }
.w-txt { margin-left: 5px; font-size: 10px; white-space: nowrap; }
.t-up { margin-left: 17px; }
.t-meet { margin-left: 7.500px; }
.t-wifi { margin-left: 7px; }
.t-vol { margin-left: 4.500px; }
.clock { display: flex; flex-direction: column; align-items: center; font-size: 9px; line-height: 13px; margin-left: 1px; width: 40px; }
.t-note { margin-left: 16px; margin-right: 16px; }
```
